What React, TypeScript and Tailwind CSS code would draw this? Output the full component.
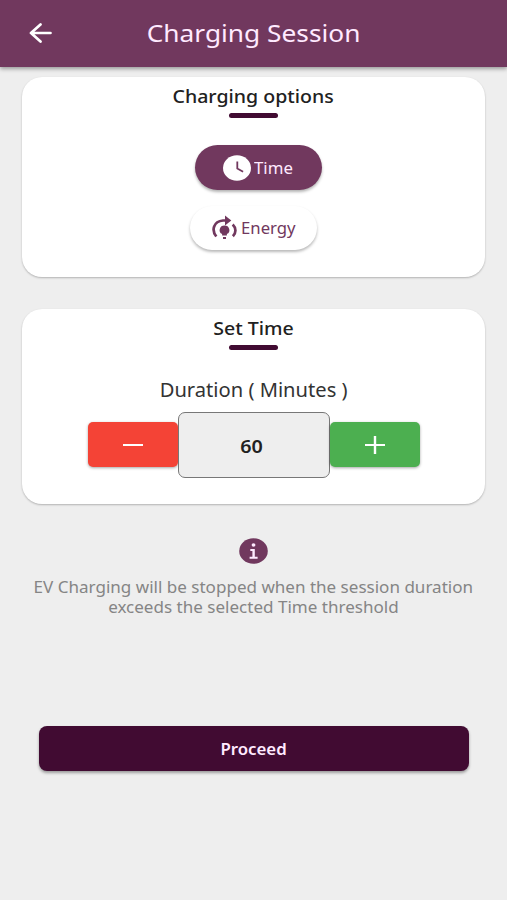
import React from "react";

function Wide({ children, className = "scale-x-[1.065]" }: { children: React.ReactNode; className?: string }) {
  return <span className={"inline-block whitespace-nowrap " + className}>{children}</span>;
}

function CardTitle({ children }: { children: React.ReactNode }) {
  return (
    <>
      <h2 className="flex h-[36px] items-center justify-center pt-[3px] text-[18.7px] leading-none font-medium text-[#212121]">
        <Wide className="scale-x-[1.045]">{children}</Wide>
      </h2>
      <div className="mx-auto h-[5px] w-[49px] rounded-full bg-[#410b32]" />
    </>
  );
}

const card = "mx-auto flex w-[463px] shrink-0 flex-col rounded-[20px] bg-white shadow-[0_1px_2px_rgba(0,0,0,0.25)]";

export default function App() {
  return (
    <div className="flex h-[900px] w-[507px] flex-col overflow-hidden bg-[#eeeeee] font-['Noto_Sans',sans-serif]">
      <header className="flex h-[67px] shrink-0 items-center bg-[#71385e] text-[#ffeaff] shadow-[0_2px_4px_rgba(0,0,0,0.35)]">
        <button className="ml-[29px] flex w-[23px] text-white" aria-label="Back">
          <svg width="23" height="20" viewBox="0 0 23 20" fill="none" stroke="currentColor" strokeWidth="2.7" strokeLinecap="round" strokeLinejoin="round" className="-translate-y-px">
            <path d="M21.500 10H2M11.500 1.500 2 10l9.500 8.500" />
          </svg>
        </button>
        <h1 className="mr-[51px] flex-1 pb-[2px] text-center text-[24px] leading-none">
          <Wide className="scale-x-[1.095]">Charging Session</Wide>
        </h1>
      </header>

      <section className={card + " mt-[10px] h-[200px]"}>
        <CardTitle>Charging options</CardTitle>
        <button className="mt-[27px] ml-[173px] flex h-[45px] w-[127px] items-center rounded-full bg-[#71385e] pl-[28px] text-[16px] leading-none text-[#ffeaff] shadow-[0_2px_3px_rgba(0,0,0,0.3)]">
          <svg width="28" height="26" viewBox="0 0 28 26" className="mr-[3px]">
            <ellipse cx="14" cy="13" rx="14" ry="12.800" fill="white" />
            <path d="M14.300 6.500v7l5.800 3.300" fill="none" stroke="#71385e" strokeWidth="1.800" />
          </svg>
          <Wide className="origin-left scale-x-[1.05]">Time</Wide>
        </button>
        <button className="mt-[16px] ml-[168px] flex h-[44px] w-[127px] items-center rounded-full bg-white pl-[22px] text-[16px] leading-none text-[#71385e] shadow-[0_2px_3px_rgba(0,0,0,0.28)]">
          <svg width="26" height="26" viewBox="0 0 26 26" className="mr-[3px]" fill="currentColor">
            <path d="M4.300 21.500C-.8 15 1.500 6.500 11 5.500h5M20.700 9.500c3.700 3.600 3.500 8.500.2 11.800" fill="none" stroke="currentColor" strokeWidth="2.700" />
            <path d="M13 .5 19.300 5.500 13 10.500z" />
            <path d="M12.500 10.500a4.900 4.600 0 0 1 2.400 8.600v1.400h-4.800v-1.400a4.900 4.600 0 0 1 2.400-8.600zM11 22h3v2h-3z" />
          </svg>
          <Wide className="origin-left scale-x-[1.045]">Energy</Wide>
        </button>
      </section>

      <section className={card + " mt-[32px] h-[195px]"}>
        <CardTitle>Set Time</CardTitle>
        <label className="mt-[30px] text-center text-[19px] leading-[20px] text-[#333333]">
          <Wide className="scale-x-[1.06]">Duration ( Minutes )</Wide>
        </label>
        <div className="mt-[12px] flex items-center justify-center pl-px">
          <button className="mb-px flex h-[45px] w-[90px] items-center justify-center rounded-[5px] bg-[#f44336] shadow-[0_1px_3px_rgba(0,0,0,0.35)]" aria-label="Decrease">
            <span className="h-[2px] w-[20px] bg-white" />
          </button>
          <div className="flex h-[66px] w-[152px] items-center justify-center rounded-[7px] border-[1.500px] border-[#777777] bg-[#eeeeee] pt-[3px] pr-[4px] text-[18.500px] leading-none font-semibold text-[#212121]">
            <Wide>60</Wide>
          </div>
          <button className="mb-px flex h-[45px] w-[90px] items-center justify-center rounded-[5px] bg-[#4caf50] shadow-[0_1px_3px_rgba(0,0,0,0.35)]" aria-label="Increase">
            <svg width="20" height="18" viewBox="0 0 20 18" fill="white">
              <path d="M0 8h20v2H0zM8.800 0h2.400v18H8.800z" />
            </svg>
          </button>
        </div>
      </section>

      <svg width="29" height="26" viewBox="0 0 29 26" className="mx-auto mt-[34px] shrink-0">
        <ellipse cx="14.500" cy="13" rx="14.300" ry="12.800" fill="#71385e" />
        <ellipse cx="14.500" cy="7" rx="1.900" ry="1.700" fill="#ffeaff" />
        <path d="M11.300 11h4.500v7.700h2.800v2h-8v-2h2.800v-5.700h-2.100z" fill="#ffeaff" />
      </svg>
      <p className="mt-[13px] text-center text-[16px] leading-[20px] text-[#858585]">
        <Wide>EV Charging will be stopped when the session duration</Wide>
        <br />
        <Wide>exceeds the selected Time threshold</Wide>
      </p>

      <button className="mx-auto mt-[109px] h-[45px] w-[430px] shrink-0 rounded-[8px] bg-[#410b32] text-[16px] leading-none font-semibold text-[#ffeaff] shadow-[0_2px_3px_rgba(0,0,0,0.35)]">
        <Wide className="scale-x-[1.05]">Proceed</Wide>
      </button>
    </div>
  );
}
